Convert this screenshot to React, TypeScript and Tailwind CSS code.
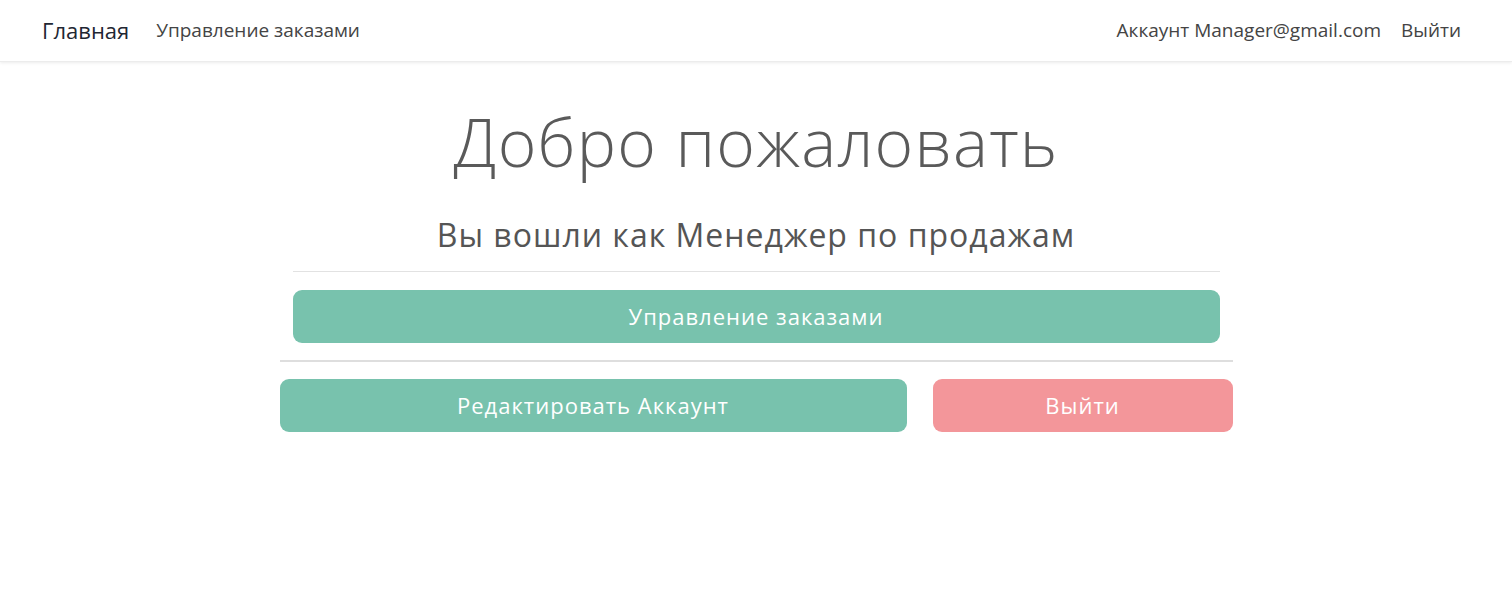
import React from 'react';

const font = { fontFamily: '"Open Sans", "Noto Sans", sans-serif' };

export default function App() {
  return (
    <div className="min-h-screen bg-white text-[#5a5a5a]" style={font}>
      <nav className="flex h-[62px] items-center justify-between px-[42px] bg-white shadow-[0_1px_3px_rgba(0,0,0,0.08)] border-b border-[#ececec]">
        <div className="flex items-center">
          <a href="#" className="text-[22px] text-[#1f2733] mr-[27px]">Главная</a>
          <a href="#" className="text-[19px] text-[#444]">Управление заказами</a>
        </div>
        <div className="flex items-center gap-[20px] pr-[9px] text-[19px] text-[#444]">
          <a href="#">Аккаунт Manager@gmail.com</a>
          <a href="#">Выйти</a>
        </div>
      </nav>

      <main className="mx-auto w-[953px] pt-[39px]">
        <h1 className="text-center text-[66px] leading-[80px] font-light tracking-[1.2px] text-[#5a5a5a]">
          Добро пожаловать
        </h1>
        <h2 className="mt-[34px] text-center text-[32px] leading-[40px] tracking-[1px] text-[#555]">
          Вы вошли как Менеджер по продажам
        </h2>
        <div className="px-[13px]">
          <hr className="mt-[16px] border-t border-[#e2e2e2]" />
          <button className="mt-[18px] h-[53px] w-full rounded-[9px] bg-[#78c2ad] text-[22px] tracking-[1px] text-white">
            Управление заказами
          </button>
        </div>
        <hr className="mt-[17px] border-t-2 border-[#dedede]" />
        <div className="mt-[17px] flex gap-[26px]">
          <button className="h-[53px] w-[627px] rounded-[9px] bg-[#78c2ad] text-[22px] tracking-[1px] text-white">
            Редактировать Аккаунт
          </button>
          <button className="h-[53px] flex-1 rounded-[9px] bg-[#f3969a] text-[22px] tracking-[1px] text-white">
            Выйти
          </button>
        </div>
      </main>
    </div>
  );
}
